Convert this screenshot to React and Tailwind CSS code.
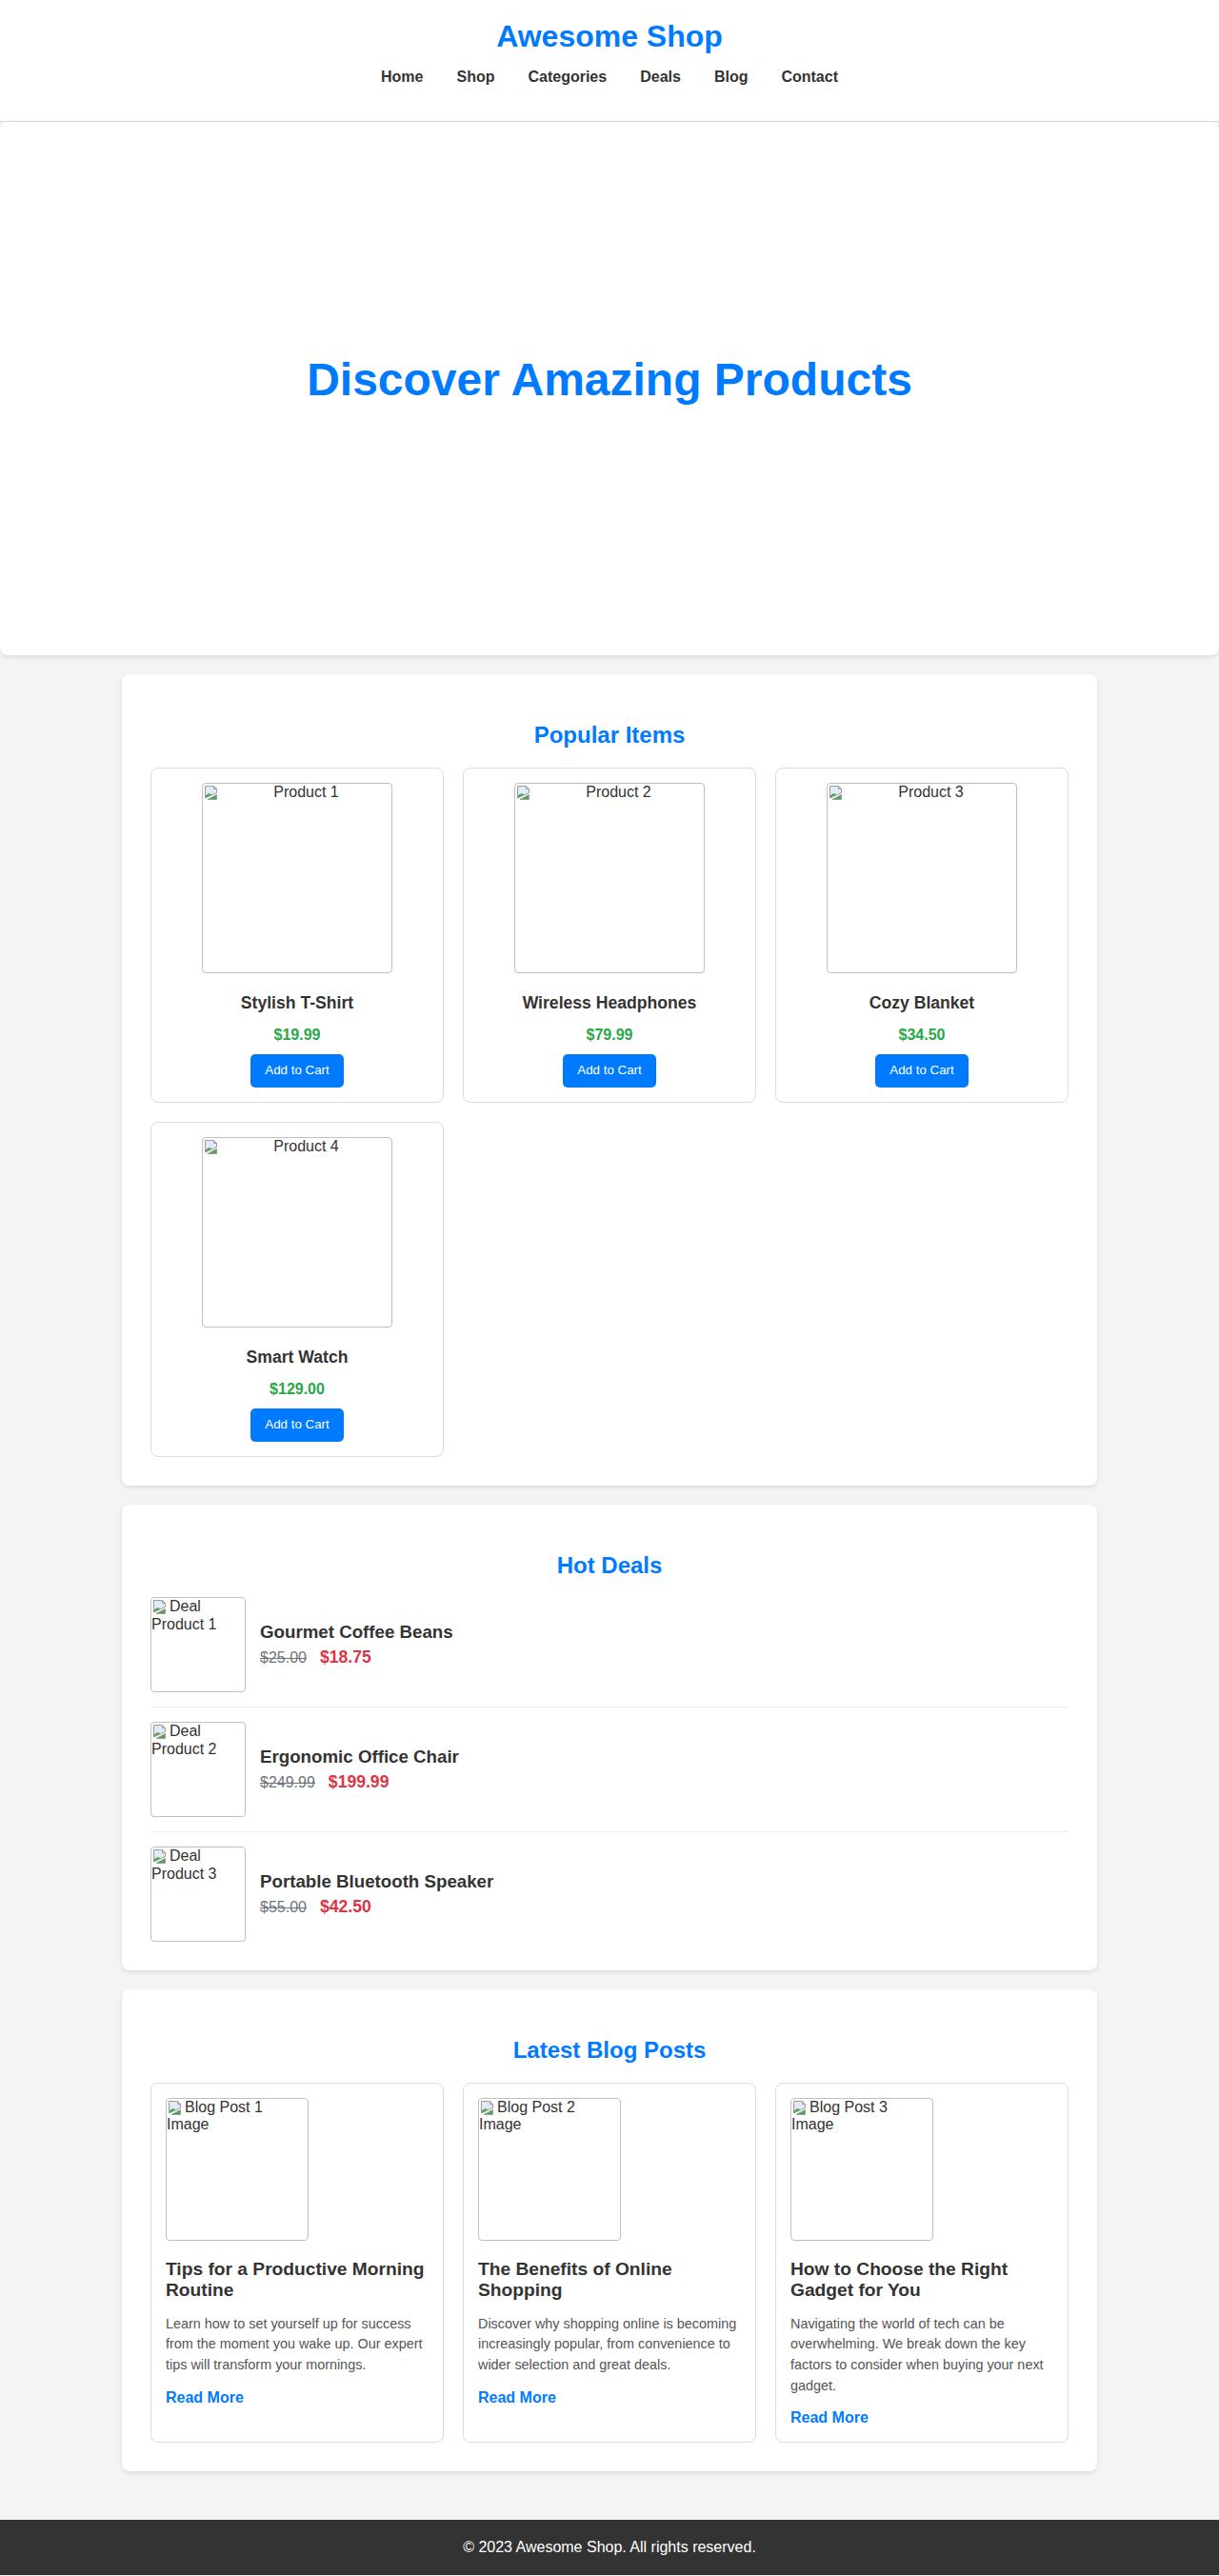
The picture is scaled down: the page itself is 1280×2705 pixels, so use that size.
const navLinks = ["Home", "Shop", "Categories", "Deals", "Blog", "Contact"];

const products = [
  { id: 1, name: "Stylish T-Shirt", price: "$19.99" },
  { id: 2, name: "Wireless Headphones", price: "$79.99" },
  { id: 3, name: "Cozy Blanket", price: "$34.50" },
  { id: 4, name: "Smart Watch", price: "$129.00" },
];

const deals = [
  { id: 1, name: "Gourmet Coffee Beans", oldPrice: "$25.00", price: "$18.75" },
  { id: 2, name: "Ergonomic Office Chair", oldPrice: "$249.99", price: "$199.99" },
  { id: 3, name: "Portable Bluetooth Speaker", oldPrice: "$55.00", price: "$42.50" },
];

const posts = [
  {
    id: 1,
    title: "Tips for a Productive Morning Routine",
    excerpt:
      "Learn how to set yourself up for success from the moment you wake up. Our expert tips will transform your mornings.",
  },
  {
    id: 2,
    title: "The Benefits of Online Shopping",
    excerpt:
      "Discover why shopping online is becoming increasingly popular, from convenience to wider selection and great deals.",
  },
  {
    id: 3,
    title: "How to Choose the Right Gadget for You",
    excerpt:
      "Navigating the world of tech can be overwhelming. We break down the key factors to consider when buying your next gadget.",
  },
];

// broken image placeholder, like the browser draws it
function BrokenIcon() {
  return (
    <svg
      width="16"
      height="16"
      viewBox="0 0 16 16"
      className="float-left mt-[1px] ml-[1px] mr-[2px]"
    >
      <path d="M1.5 1.5h9l3 3V8.5L1.5 14Z" fill="#dfe9f7" stroke="#9c9c9c" />
      <path d="M10.5 1.5v3h3" fill="none" stroke="#9c9c9c" />
      <path d="M2 11.2l3.5-2.2 3 1.2L2 13.4Z" fill="#4ca64c" />
      <path d="M4 15.5l9.5-5v5Z" fill="#4ca64c" stroke="#9c9c9c" />
    </svg>
  );
}

function BrokenImage({ alt, className }) {
  return (
    <div
      className={`overflow-hidden rounded-[4px] border border-[#c0c0c0] bg-white text-[16px] leading-[18.4px] text-[#333] ${className}`}
    >
      <BrokenIcon />
      <span>{alt}</span>
    </div>
  );
}

function Section({ title, children }) {
  return (
    <section className="rounded-[8px] bg-white p-[30px] shadow-[0_2px_5px_rgba(0,0,0,0.1)]">
      <h2 className="my-5 text-center text-[24px] font-bold leading-[27.6px] text-[#007bff]">
        {title}
      </h2>
      {children}
    </section>
  );
}

function ProductCard({ product }) {
  return (
    <div className="flex flex-col items-center rounded-[8px] border border-[#ddd] p-[15px] text-center">
      <BrokenImage
        alt={`Product ${product.id}`}
        className="h-[200px] w-[200px] text-center"
      />
      <h3 className="mt-[21px] text-[17.6px] font-bold leading-[20px] text-[#333]">
        {product.name}
      </h3>
      <p className="mt-[15px] text-[16px] font-bold leading-[18px] text-[#28a745]">
        {product.price}
      </p>
      <button className="mt-[11px] h-[35px] rounded-[5px] bg-[#007bff] px-[15px] text-[13.33px] text-white">
        Add to Cart
      </button>
    </div>
  );
}

function DealRow({ deal, last }) {
  return (
    <div
      className={`flex items-center ${
        last ? "" : "mb-[15px] border-b border-[#eee] pb-[15px]"
      }`}
    >
      <BrokenImage
        alt={`Deal Product ${deal.id}`}
        className="h-[100px] w-[100px] shrink-0 text-left"
      />
      <div className="ml-[15px]">
        <h3 className="mb-[5px] text-[18.72px] font-bold leading-[21.5px] text-[#333]">
          {deal.name}
        </h3>
        <div className="leading-[20px]">
          <span className="text-[16px] text-[#6c757d] line-through">
            {deal.oldPrice}
          </span>
          <span className="ml-[14px] text-[17.6px] font-bold text-[#dc3545]">
            {deal.price}
          </span>
        </div>
      </div>
    </div>
  );
}

function BlogCard({ post }) {
  return (
    <div className="flex flex-col rounded-[8px] border border-[#ddd] p-[15px]">
      <BrokenImage
        alt={`Blog Post ${post.id} Image`}
        className="h-[150px] w-[150px] text-left"
      />
      <h3 className="mt-[19px] text-[19.2px] font-bold leading-[22px] text-[#333]">
        {post.title}
      </h3>
      <p className="mt-[14px] text-[14.4px] leading-[21.6px] text-[#555]">
        {post.excerpt}
      </p>
      <a
        href="#"
        className="mt-[14px] block text-[16px] font-bold leading-[18.4px] text-[#007bff]"
      >
        Read More
      </a>
    </div>
  );
}

export default function App() {
  return (
    <div className="min-h-screen bg-[#f4f4f4] font-['Liberation_Sans',Arial,sans-serif] text-[#333]">
      <header className="border-b border-[#ddd] bg-white pt-5 pb-[37px] text-center">
        <h1 className="text-[32px] font-bold leading-[37px] text-[#007bff]">
          Awesome Shop
        </h1>
        <nav className="mt-[15px] flex justify-center gap-[35px]">
          {navLinks.map((link) => (
            <a
              key={link}
              href="#"
              className="text-[16px] font-bold leading-[18px] text-[#333]"
            >
              {link}
            </a>
          ))}
        </nav>
      </header>

      <section className="flex h-[560px] items-center justify-center rounded-[8px] bg-white pb-5 shadow-[0_2px_5px_rgba(0,0,0,0.1)]">
        <h2 className="text-[48px] font-bold leading-[55px] text-[#007bff]">
          Discover Amazing Products
        </h2>
      </section>

      <main className="mx-auto mt-5 mb-[51px] flex max-w-[1024px] flex-col gap-5">
        <Section title="Popular Items">
          <div className="grid grid-cols-3 gap-5">
            {products.map((product) => (
              <ProductCard key={product.id} product={product} />
            ))}
          </div>
        </Section>

        <Section title="Hot Deals">
          <div>
            {deals.map((deal, i) => (
              <DealRow key={deal.id} deal={deal} last={i === deals.length - 1} />
            ))}
          </div>
        </Section>

        <Section title="Latest Blog Posts">
          <div className="grid grid-cols-3 gap-5">
            {posts.map((post) => (
              <BlogCard key={post.id} post={post} />
            ))}
          </div>
        </Section>
      </main>

      <footer className="bg-[#333] py-5 text-center text-[16px] leading-[18px] text-white">
        <p>© 2023 Awesome Shop. All rights reserved.</p>
      </footer>
    </div>
  );
}
